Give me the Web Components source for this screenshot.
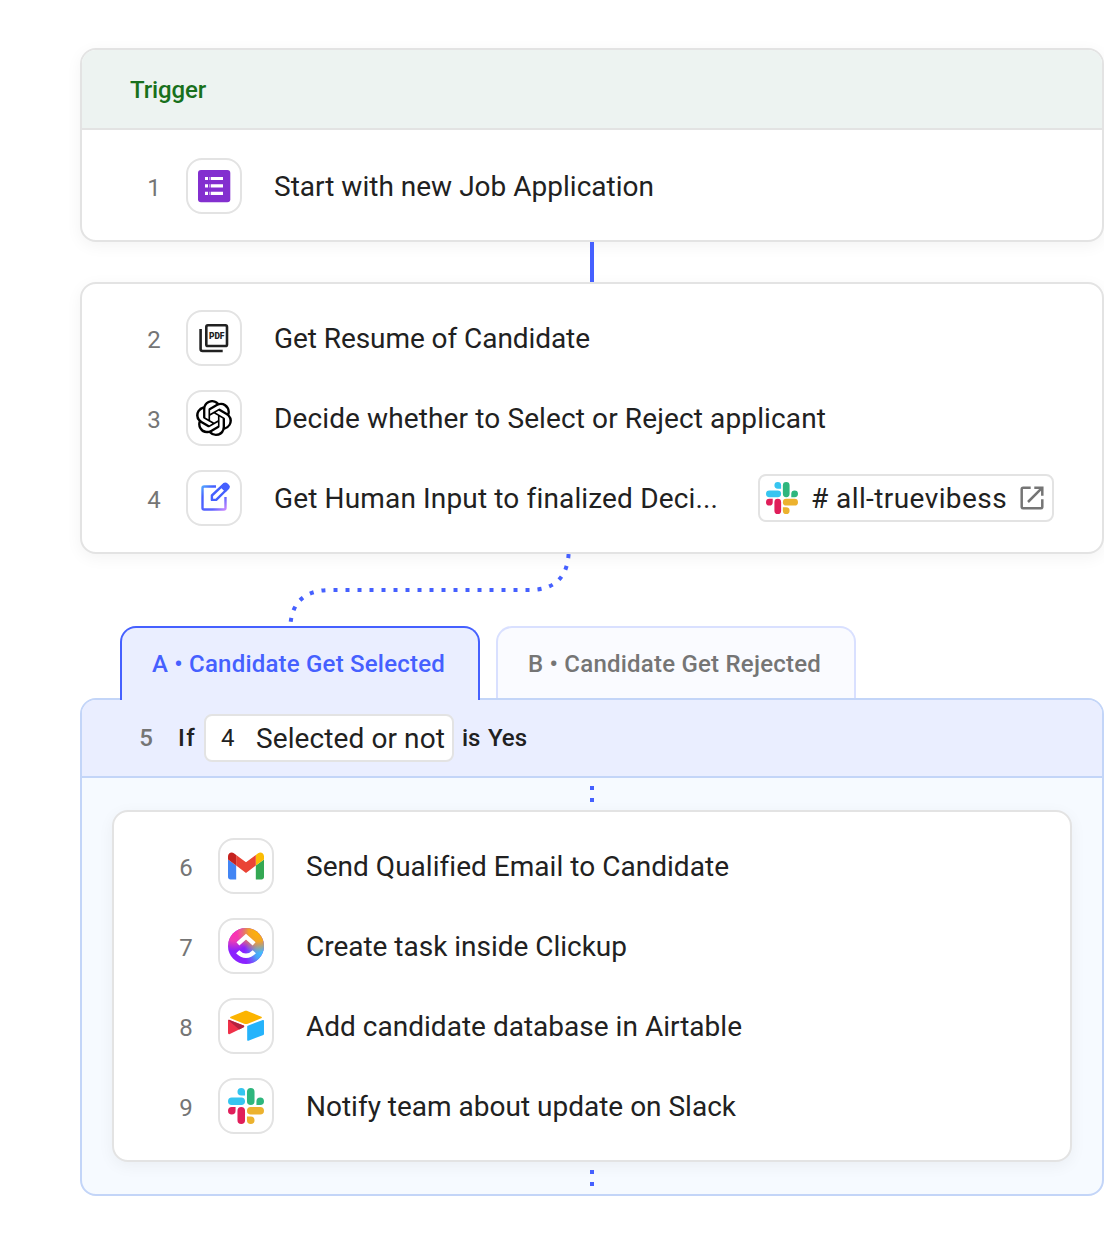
<!DOCTYPE html>
<html lang="en">
<head>
<meta charset="utf-8">
<title>Workflow</title>
<style>
body {
  margin: 0;
  background: #fff;
  color: #212121;
  font-family: Roboto, "Noto Sans", sans-serif;
  font-size: 28px;
  line-height: 36px;
  overflow: hidden;
}
</style>
</head>
<body>
<flow-canvas>
  <flow-card>
    <flow-text slot="header" width="76" size="24" weight="500">Trigger</flow-text>
    <flow-step number="1" icon="form"><flow-text width="380">Start with new Job Application</flow-text></flow-step>
  </flow-card>
  <flow-line></flow-line>
  <flow-card>
    <flow-step number="2" icon="pdf"><flow-text width="316">Get Resume of Candidate</flow-text></flow-step>
    <flow-step number="3" icon="openai"><flow-text width="552">Decide whether to Select or Reject applicant</flow-text></flow-step>
    <flow-step number="4" icon="edit">
      <flow-text width="443">Get Human Input to finalized Deci...</flow-text>
      <flow-chip slot="end" icon="slack" link><flow-text width="196"># all-truevibess</flow-text></flow-chip>
    </flow-step>
  </flow-card>
  <flow-curve></flow-curve>
  <flow-branch>
    <flow-tab slot="tabs" active><flow-text width="293" size="24" weight="500">A &bull; Candidate Get Selected</flow-text></flow-tab>
    <flow-tab slot="tabs"><flow-text width="293" size="24" weight="500">B &bull; Candidate Get Rejected</flow-text></flow-tab>
    <flow-condition slot="condition" number="5">
      <flow-text width="18" size="24" weight="500">If</flow-text>
      <flow-chip number="4"><flow-text width="189">Selected or not</flow-text></flow-chip>
      <flow-text width="18" size="24" weight="500">is</flow-text>
      <flow-text width="39" size="24" weight="500">Yes</flow-text>
    </flow-condition>
    <flow-card>
      <flow-step number="6" icon="gmail"><flow-text width="422">Send Qualified Email to Candidate</flow-text></flow-step>
      <flow-step number="7" icon="clickup"><flow-text width="321">Create task inside Clickup</flow-text></flow-step>
      <flow-step number="8" icon="airtable"><flow-text width="436">Add candidate database in Airtable</flow-text></flow-step>
      <flow-step number="9" icon="slack"><flow-text width="430">Notify team about update on Slack</flow-text></flow-step>
    </flow-card>
  </flow-branch>
</flow-canvas>

<script>
const ICONS = {
  form: `<svg viewBox="0 0 36 36">
    <rect x="2" y="2" width="32.3" height="32.3" rx="3" fill="#832fcf"/>
    <path fill="#fff" d="M9 9h3v3H9zM14.7 9H27v3H14.7zM9 16.3h3v3.2H9zM14.7 16.3H27v3.2H14.7zM9 23.7h3v3.2H9zM14.7 23.7H27v3.2H14.7z"/>
    <path fill="#c59be9" d="M13 9h.9v3H13zM13 16.3h.9v3.2H13zM13 23.7h.9v3.2H13z"/>
  </svg>`,
  pdf: `<svg viewBox="0 0 36 36">
    <g fill="none" stroke="#212121" stroke-width="2.6">
      <rect x="10.3" y="5.3" width="20.7" height="20.7" rx="1.6"/>
      <path d="M4.6 9v20q0 2 2 2H26.7"/>
    </g>
    <text x="20.7" y="18.8" font-family="Roboto, sans-serif" font-size="9.6" font-weight="900" fill="#212121" text-anchor="middle" textLength="15.6" lengthAdjust="spacingAndGlyphs">PDF</text>
  </svg>`,
  openai: `<svg viewBox="0 0 24 24"><path d="M22.2819 9.8211a5.9847 5.9847 0 0 0-.5157-4.9108 6.0462 6.0462 0 0 0-6.5098-2.9A6.0651 6.0651 0 0 0 4.9807 4.1818a5.9847 5.9847 0 0 0-3.9977 2.9 6.0462 6.0462 0 0 0 .7427 7.0966 5.98 5.98 0 0 0 .511 4.9107 6.051 6.051 0 0 0 6.5146 2.9001A5.9847 5.9847 0 0 0 13.2599 24a6.0557 6.0557 0 0 0 5.7718-4.2058 5.9894 5.9894 0 0 0 3.9977-2.9001 6.0557 6.0557 0 0 0-.7475-7.0729zm-9.022 12.6081a4.4755 4.4755 0 0 1-2.8764-1.0408l.1419-.0804 4.7783-2.7582a.7948.7948 0 0 0 .3927-.6813v-6.7369l2.02 1.1686a.071.071 0 0 1 .038.052v5.5826a4.504 4.504 0 0 1-4.4945 4.4944zm-9.6607-4.1254a4.4708 4.4708 0 0 1-.5346-3.0137l.142.0852 4.783 2.7582a.7712.7712 0 0 0 .7806 0l5.8428-3.3685v2.3324a.0804.0804 0 0 1-.0332.0615L9.74 19.9502a4.4992 4.4992 0 0 1-6.1408-1.6464zM2.3408 7.8956a4.485 4.485 0 0 1 2.3655-1.9728V11.6a.7664.7664 0 0 0 .3879.6765l5.8144 3.3543-2.0201 1.1685a.0757.0757 0 0 1-.071 0l-4.8303-2.7865A4.504 4.504 0 0 1 2.3408 7.872zm16.5963 3.8558L13.1038 8.364 15.1192 7.2a.0757.0757 0 0 1 .071 0l4.8303 2.7913a4.4944 4.4944 0 0 1-.6765 8.1042v-5.6772a.79.79 0 0 0-.407-.667zm2.0107-3.0231l-.142-.0852-4.7735-2.7818a.7759.7759 0 0 0-.7854 0L9.409 9.2297V6.8974a.0662.0662 0 0 1 .0284-.0615l4.8303-2.7866a4.4992 4.4992 0 0 1 6.6802 4.66zM8.3065 12.863l-2.02-1.1638a.0804.0804 0 0 1-.038-.0567V6.0742a4.4992 4.4992 0 0 1 7.3757-3.4537l-.142.0805L8.704 5.459a.7948.7948 0 0 0-.3927.6813zm1.0976-2.3654l2.602-1.4998 2.6069 1.4998v2.9994l-2.5974 1.4997-2.6067-1.4997Z"/></svg>`,
  edit: `<svg viewBox="0 0 36 36">
    <defs><linearGradient id="g" gradientUnits="userSpaceOnUse" x1="5" y1="6" x2="30" y2="31">
      <stop offset="0" stop-color="#56b0ff"/><stop offset=".25" stop-color="#4560ff"/><stop offset=".7" stop-color="#5c63ff"/><stop offset="1" stop-color="#d98cff"/>
    </linearGradient></defs>
    <path fill="none" stroke="url(#g)" stroke-width="2.4" d="M20 6.5H8.1q-1.6 0-1.6 1.6v19.8q0 1.6 1.6 1.6h19.8q1.6 0 1.6-1.6V17"/>
    <path fill="none" stroke="#4560ff" stroke-width="2.4" stroke-linejoin="round" d="M15.9 19.9v-4.4L28.3 3.9l3.9 4.1-12 11.9z"/>
    <path fill="#4560ff" d="M24.1 7l3.7-3.7q1.7-1.7 3.5 0l1.8 1.8q1.8 1.8 0 3.5l-3.5 3.6z"/>
  </svg>`,
  gmail: `<svg viewBox="52 31 88 88">
    <path fill="#4285f4" d="M58 108h14V74L52 59v43c0 3.32 2.69 6 6 6"/>
    <path fill="#34a853" d="M120 108h14c3.32 0 6-2.69 6-6V59l-20 15"/>
    <path fill="#fbbc04" d="M120 48v26l20-15v-8c0-7.42-8.47-11.65-14.4-7.2"/>
    <path fill="#ea4335" d="M72 74V48l24 18 24-18v26L96 92"/>
    <path fill="#c5221f" d="M52 51v8l20 15V48l-5.6-4.2c-5.94-4.45-14.4-.22-14.4 7.2"/>
  </svg>`,
  clickup: `<svg viewBox="0 0 36 36">
    <defs>
      <radialGradient id="pink" gradientUnits="userSpaceOnUse" cx="6" cy="6" r="17"><stop offset="0" stop-color="#ff2fb0"/><stop offset=".4" stop-color="#ff3fa8" stop-opacity=".85"/><stop offset="1" stop-color="#ff3fa8" stop-opacity="0"/></radialGradient>
      <radialGradient id="gold" gradientUnits="userSpaceOnUse" cx="30" cy="4" r="21"><stop offset="0" stop-color="#ffb400"/><stop offset=".45" stop-color="#ffb010" stop-opacity=".9"/><stop offset="1" stop-color="#ffa030" stop-opacity="0"/></radialGradient>
      <radialGradient id="cyan" gradientUnits="userSpaceOnUse" cx="34" cy="25" r="18"><stop offset="0" stop-color="#3fc0ff"/><stop offset=".4" stop-color="#45b0f5" stop-opacity=".9"/><stop offset="1" stop-color="#5a80ff" stop-opacity="0"/></radialGradient>
    </defs>
    <circle cx="18" cy="18" r="18" fill="#8a22ff"/>
    <circle cx="18" cy="18" r="18" fill="url(#cyan)"/>
    <circle cx="18" cy="18" r="18" fill="url(#pink)"/>
    <circle cx="18" cy="18" r="18" fill="url(#gold)"/>
    <path fill="none" stroke="#fff" stroke-width="4.4" d="M9.9 15.8l8.1-7.1 8.1 7.1M9.7 23.8q3.7 4 8.3 4t8.3-4"/>
  </svg>`,
  airtable: `<svg viewBox="11 -3 177 177">
    <path fill="#fcb400" d="M90 12.4L24 39.7c-3.6 1.5-3.6 6.7.1 8.2l66.3 26.2c5.8 2.3 12.3 2.3 18.1 0l66.2-26.2c3.7-1.5 3.7-6.7.1-8.2L108.8 12.4c-6-2.5-12.8-2.5-18.8 0"/>
    <path fill="#25b3fb" d="M105.3 88.5v65.6c0 3.1 3.1 5.2 6 4.1l73.8-28.7c1.7-.6 2.8-2.3 2.8-4.1V59.8c0-3.1-3.1-5.2-6-4.1l-73.8 28.7c-1.7.6-2.8 2.3-2.8 4.1"/>
    <path fill="#ef3049" d="M88 91.8l-70.3 33.9c-2.9 1.4-6.7-.8-6.7-4V60c0-3.4 3.5-5.9 7.3-4.4l69.5 27.9c3.8 1.5 4 6.8.2 8.3"/>
    <path fill="#b3233f" d="M88 91.8l-22 10.6-53-45.3c1.4-1.5 3.4-2.2 5.3-1.5l69.5 27.9c3.8 1.5 4 6.8.2 8.3"/>
  </svg>`,
  slack: `<svg viewBox="0 0 24 24">
    <path fill="#e01e5a" d="M5.042 15.165a2.528 2.528 0 0 1-2.52 2.523A2.528 2.528 0 0 1 0 15.165a2.527 2.527 0 0 1 2.522-2.52h2.52v2.52zM6.313 15.165a2.527 2.527 0 0 1 2.521-2.52 2.527 2.527 0 0 1 2.521 2.52v6.313A2.528 2.528 0 0 1 8.834 24a2.528 2.528 0 0 1-2.521-2.522v-6.313z"/>
    <path fill="#36c5f0" d="M8.834 5.042a2.528 2.528 0 0 1-2.521-2.52A2.528 2.528 0 0 1 8.834 0a2.528 2.528 0 0 1 2.521 2.522v2.52H8.834zM8.834 6.313a2.528 2.528 0 0 1 2.521 2.521 2.528 2.528 0 0 1-2.521 2.521H2.522A2.528 2.528 0 0 1 0 8.834a2.528 2.528 0 0 1 2.522-2.521h6.312z"/>
    <path fill="#2eb67d" d="M18.956 8.834a2.528 2.528 0 0 1 2.522-2.521A2.528 2.528 0 0 1 24 8.834a2.528 2.528 0 0 1-2.522 2.521h-2.522V8.834zM17.688 8.834a2.528 2.528 0 0 1-2.523 2.521 2.527 2.527 0 0 1-2.52-2.521V2.522A2.527 2.527 0 0 1 15.165 0a2.528 2.528 0 0 1 2.523 2.522v6.312z"/>
    <path fill="#ecb22e" d="M15.165 18.956a2.528 2.528 0 0 1 2.523 2.522A2.528 2.528 0 0 1 15.165 24a2.527 2.527 0 0 1-2.52-2.522v-2.522h2.52zM15.165 17.688a2.527 2.527 0 0 1-2.52-2.523 2.526 2.526 0 0 1 2.52-2.52h6.313A2.527 2.527 0 0 1 24 15.165a2.528 2.528 0 0 1-2.522 2.523h-6.313z"/>
  </svg>`,
  open: `<svg viewBox="0 0 24 24" fill="none" stroke="#757575" stroke-width="2.5">
    <path d="M10.7 1.7H3.2q-1.5 0-1.5 1.5v17.6q0 1.5 1.5 1.5h17.6q1.5 0 1.5-1.5v-7.5M14.3 1.7h8v8M21.8 2.200L8 16"/>
  </svg>`
};

// Attaches an open shadow root with the given styles and markup
function mount(el, css, html) {
  el.attachShadow({ mode: 'open' }).innerHTML = `<style>${css}</style>${html}`;
}

// Single line label, tracked so that it fills its width
class FlowText extends HTMLElement {
  connectedCallback() {
    if (this.shadowRoot) return;
    const size = this.getAttribute('size') || 28;
    const weight = this.getAttribute('weight') || 400;
    mount(this, `
      :host { display: block; flex: none; white-space: nowrap; font-size: ${size}px; font-weight: ${weight}; width: ${this.getAttribute('width')}px; padding-top: ${size > 24 ? 2 : 0}px; }
      span { display: inline-block; }
    `, '<span><slot></slot></span>');
    const span = this.shadowRoot.querySelector('span');
    const gap = Number(this.getAttribute('width')) - span.getBoundingClientRect().width;
    span.style.letterSpacing = `${gap / this.textContent.length}px`;
  }
}

class FlowCanvas extends HTMLElement {
  constructor() {
    super();
    mount(this, ':host { display: flex; flex-direction: column; width: 1024px; padding: 48px 0 48px 80px; }', '<slot></slot>');
  }
}

class FlowCard extends HTMLElement {
  connectedCallback() {
    if (this.shadowRoot) return;
    const hasHeader = this.querySelector('[slot="header"]');
    mount(this, `
      :host { display: block; box-sizing: border-box; border: 2px solid #e3e3e3; border-radius: 16px; background: #fff; box-shadow: 0 4px 16px rgba(0,0,0,0.05); overflow: hidden; }
      header { display: flex; align-items: center; box-sizing: border-box; height: 80px; padding: 2px 0 0 48px; background: #edf3f1; border-bottom: 2px solid #e3e3e3; color: #18701c; }
      .steps { padding: ${hasHeader ? 16 : 14}px 0 14px; }
    `, `${hasHeader ? '<header><slot name="header"></slot></header>' : ''}<div class="steps"><slot></slot></div>`);
  }
}

class FlowStep extends HTMLElement {
  connectedCallback() {
    if (this.shadowRoot) return;
    mount(this, `
      :host { display: flex; align-items: center; height: 80px; padding: 0 48px 0 64px; }
      .number { width: 16px; text-align: center; font-size: 24px; color: #757575; padding-top: 4px; }
      .tile { display: flex; align-items: center; justify-content: center; box-sizing: border-box; width: 56px; height: 56px; margin: 0 32px 0 24px; border: 2px solid #e3e3e3; border-radius: 16px; }
      svg { display: block; width: 36px; height: 36px; }
      .end { margin-left: auto; }
    `, `
      <span class="number">${this.getAttribute('number')}</span>
      <span class="tile">${ICONS[this.getAttribute('icon')]}</span>
      <slot></slot>
      <span class="end"><slot name="end"></slot></span>
    `);
  }
}

class FlowChip extends HTMLElement {
  connectedCallback() {
    if (this.shadowRoot) return;
    const number = this.getAttribute('number');
    mount(this, `
      :host { display: flex; align-items: center; box-sizing: border-box; height: 48px; border: 2px solid #e3e3e3; border-radius: 8px; padding: 0 6px; background: #fff; color: #212121; }
      :host([number]) { padding-right: 7px; }
      .icon svg { display: block; width: 32px; height: 32px; margin-right: 13px; }
      .link svg { display: block; width: 24px; height: 24px; margin: 0 2px 0 13px; }
      .number { width: 15px; padding: 0 20px 0 9px; font-size: 24px; font-weight: 400; }
    `, `
      ${number ? `<span class="number">${number}</span>` : `<span class="icon">${ICONS[this.getAttribute('icon')]}</span>`}
      <slot></slot>
      ${this.hasAttribute('link') ? `<span class="link">${ICONS.open}</span>` : ''}
    `);
  }
}

// Straight connector between two cards
class FlowLine extends HTMLElement {
  constructor() {
    super();
    mount(this, ':host { display: block; width: 4px; height: 40px; margin: 0 auto; background: #4560ff; position: relative; }', '');
  }
}

// Dotted connector to the active branch
class FlowCurve extends HTMLElement {
  constructor() {
    super();
    mount(this, ':host { display: block; height: 72px; position: relative; } svg { display: block; }', `
      <svg width="1024" height="72" viewBox="80 554 1024 72" fill="none" stroke="#4560ff" stroke-width="4" stroke-dasharray="4 8">
        <path d="M568.6 554C567 579 553 590 529 590H331C307 590 292.5 600 290.5 624"/>
      </svg>
    `);
  }
}

class FlowTab extends HTMLElement {
  constructor() {
    super();
    mount(this, `
      :host { display: flex; box-sizing: border-box; width: 360px; height: 72px; padding: 18px 30px 0; border: 2px solid #d9e0ff; border-bottom: 0; border-radius: 16px 16px 0 0; background: #fafbff; color: #757575; }
      :host([active]) { height: 74px; margin-bottom: -2px; position: relative; z-index: 1; border-color: #4560ff; background: #eaeeff; color: #4560ff; }
    `, '<slot></slot>');
  }
}

class FlowCondition extends HTMLElement {
  connectedCallback() {
    if (this.shadowRoot) return;
    mount(this, `
      :host { display: flex; align-items: center; gap: 8px; height: 76px; padding-left: 56px; background: #eaeeff; border-bottom: 2px solid #c3d5f8; }
      .number { width: 16px; margin-right: 16px; text-align: center; font-size: 24px; font-weight: 500; color: #757575; }
    `, `<span class="number">${this.getAttribute('number')}</span><slot></slot>`);
  }
}

class FlowBranch extends HTMLElement {
  constructor() {
    super();
    mount(this, `
      :host { display: block; }
      .tabs { display: flex; align-items: flex-start; gap: 16px; padding-left: 40px; }
      .panel { border: 2px solid #c3d5f8; border-radius: 16px; background: #f6faff; overflow: hidden; }
      .body { padding: 0 30px; }
      .dots { display: flex; flex-direction: column; align-items: center; gap: 8px; height: 24px; padding-top: 8px; position: relative; }
      .dots i { width: 4px; height: 4px; background: #4560ff; }
    `, `
      <div class="tabs"><slot name="tabs"></slot></div>
      <div class="panel">
        <slot name="condition"></slot>
        <div class="body">
          <div class="dots"><i></i><i></i></div>
          <slot></slot>
          <div class="dots"><i></i><i></i></div>
        </div>
      </div>
    `);
  }
}

customElements.define('flow-text', FlowText);
customElements.define('flow-canvas', FlowCanvas);
customElements.define('flow-card', FlowCard);
customElements.define('flow-step', FlowStep);
customElements.define('flow-chip', FlowChip);
customElements.define('flow-line', FlowLine);
customElements.define('flow-curve', FlowCurve);
customElements.define('flow-tab', FlowTab);
customElements.define('flow-condition', FlowCondition);
customElements.define('flow-branch', FlowBranch);
</script>
</body>
</html>
